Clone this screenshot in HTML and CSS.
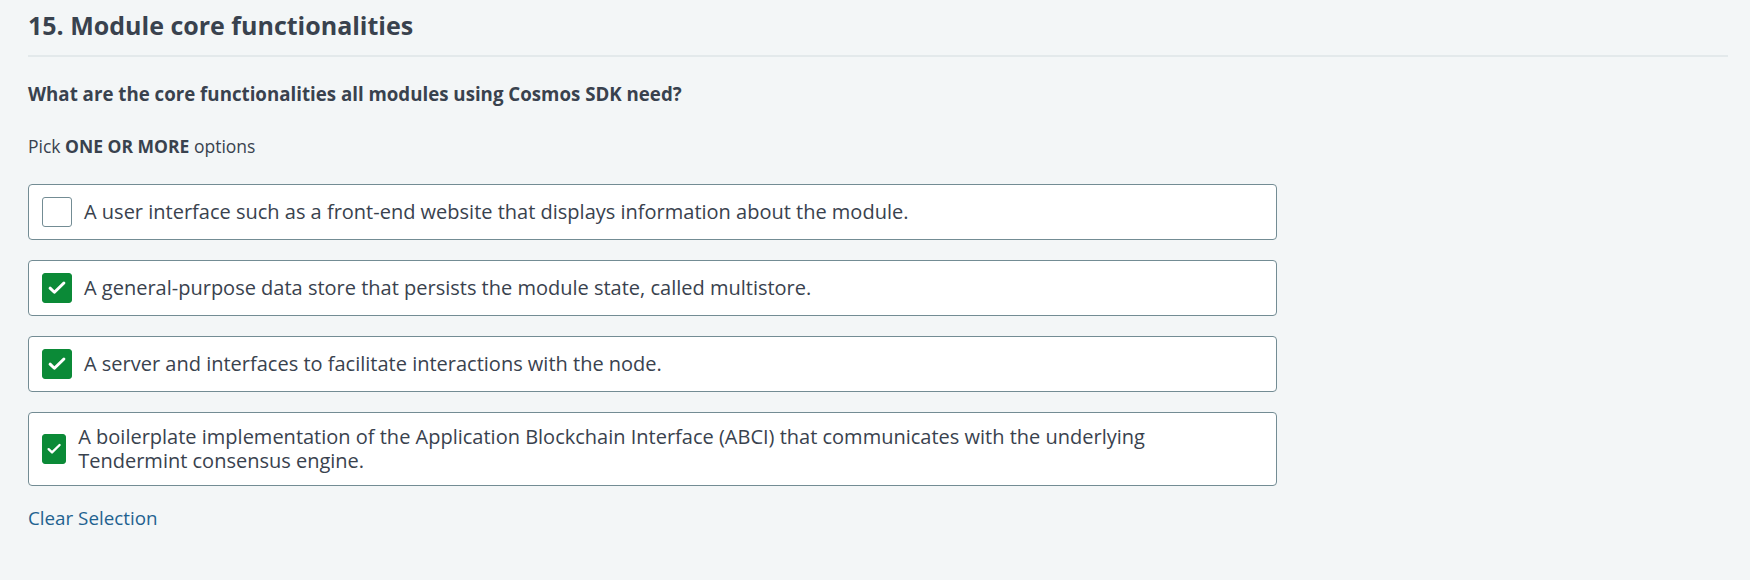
FILE: index.html
```html
<!DOCTYPE html>
<html lang="en">
<head>
<meta charset="utf-8">
<title>Module core functionalities</title>
<link rel="stylesheet" href="styles.css">
</head>
<body>
<main class="page">
  <h1 class="title">15. Module core functionalities</h1>
  <p class="question">What are the core functionalities all modules using Cosmos SDK need?</p>
  <p class="hint">Pick <strong>ONE OR MORE</strong> options</p>
  <ul class="options">
    <li class="option">
      <span class="check"></span>
      <span class="option-text">A user interface such as a front-end website that displays information about the module.</span>
    </li>
    <li class="option">
      <span class="check check--on"><svg viewBox="0 0 30 30" class="tick"><path d="M7.6 15.2 12.2 19.6 22.4 9.6" /></svg></span>
      <span class="option-text">A general-purpose data store that persists the module state, called multistore.</span>
    </li>
    <li class="option">
      <span class="check check--on"><svg viewBox="0 0 30 30" class="tick"><path d="M7.6 15.2 12.2 19.6 22.4 9.6" /></svg></span>
      <span class="option-text">A server and interfaces to facilitate interactions with the node.</span>
    </li>
    <li class="option">
      <span class="check check--on"><svg viewBox="0 0 30 30" class="tick"><path d="M7.6 15.2 12.2 19.6 22.4 9.6" /></svg></span>
      <span class="option-text">A boilerplate implementation of the Application Blockchain Interface (ABCI) that communicates with the underlying Tendermint consensus engine.</span>
    </li>
  </ul>
  <a class="clear" href="#">Clear Selection</a>
</main>
</body>
</html>
```

FILE: styles.css
```css
html, body {
  margin: 0;
  padding: 0;
  background: #f3f6f7;
}

body {
  font-family: "Open Sans", "Noto Sans", "Liberation Sans", sans-serif;
  color: #39424e;
}

.page {
  width: 1700px;
  padding: 8px 0 0 28px;
  display: flex;
  flex-direction: column;
  align-items: flex-start;
}

.title {
  align-self: stretch;
  margin: 0;
  font-size: 25px;
  font-weight: 700;
  line-height: 34px;
  padding-bottom: 13px;
  border-bottom: 2px solid #e3e9eb;
}

.question {
  margin: 24px 0 0;
  font-size: 18.7px;
  font-weight: 700;
  line-height: 26px;
}

.hint {
  margin: 27px 0 0;
  font-size: 17.5px;
  line-height: 24px;
}

.hint strong {
  font-weight: 700;
}

.options {
  list-style: none;
  margin: 26px 0 0;
  padding: 0;
  width: 1249px;
  display: flex;
  flex-direction: column;
  gap: 20px;
}

.option {
  display: flex;
  align-items: center;
  gap: 12px;
  padding: 12px 120px 12px 13px;
  background: #ffffff;
  border: 1px solid #738c94;
  border-radius: 4px;
}

.check {
  box-sizing: border-box;
  width: 30px;
  height: 30px;
  flex: 0 1 30px;
  border: 1px solid #738c94;
  border-radius: 3px;
  background: #ffffff;
  display: flex;
  align-items: center;
  justify-content: center;
  overflow: hidden;
}

.check--on {
  background: #0b8a37;
  border-color: #0b8a37;
}

.tick {
  width: 100%;
  height: 100%;
  flex: none;
  fill: none;
  stroke: #ffffff;
  stroke-width: 3.2;
  stroke-linecap: round;
  stroke-linejoin: round;
}

.option-text {
  font-size: 20px;
  line-height: 24px;
}

.clear {
  margin-top: 19px;
  font-size: 18.8px;
  line-height: 26px;
  color: #1f6290;
  text-decoration: none;
}
```
